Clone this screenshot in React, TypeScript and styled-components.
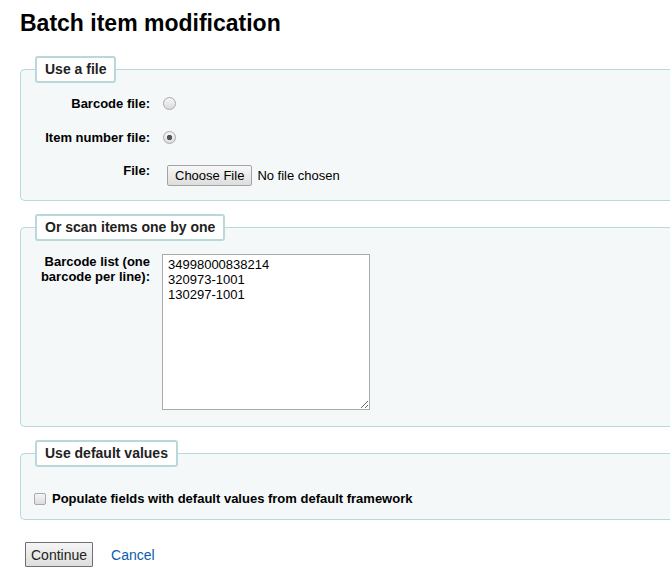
import React from "react";
import styled, { createGlobalStyle } from "styled-components";

const GlobalStyle = createGlobalStyle`
  html, body {
    margin: 0;
    padding: 0;
    background: #fff;
  }
  body {
    font-family: "Liberation Sans", Arial, sans-serif;
    font-size: 13px;
    color: #000;
  }
`;

const Page = styled.main`
  padding: 0 0 0 20px;
`;

const Title = styled.h1`
  margin: 10px 0 20px;
  font-size: 23px;
  line-height: 26px;
  font-weight: bold;
  color: #000;
`;

const Fieldset = styled.fieldset<{ $padBottom?: number }>`
  margin: 0 0 13px;
  padding: 13px 0 ${(p) => p.$padBottom ?? 14}px 10px;
  border: 1px solid #b9d8d9;
  border-right: none;
  border-radius: 5px 0 0 5px;
  background: #f4f8f9;
  min-width: 0;
`;

const Legend = styled.legend`
  margin-left: 4px;
  padding: 0 8px;
  border: 2px solid #b9d8d9;
  border-radius: 3px;
  background: #fff;
  font-size: 14px;
  line-height: 23px;
  font-weight: bold;
  color: #222;
`;

const Row = styled.div<{ $last?: boolean }>`
  display: flex;
  align-items: flex-start;
  margin-bottom: ${(p) => (p.$last ? 0 : 18.5)}px;
`;

const Label = styled.label`
  flex: 0 0 119px;
  margin-right: 12px;
  text-align: right;
  font-weight: bold;
  font-size: 13px;
  line-height: 15px;
`;

const Radio = styled.input.attrs({ type: "radio" })`
  appearance: none;
  box-sizing: border-box;
  width: 13px;
  height: 13px;
  margin: 1px 0 0 1px;
  border: 1px solid #a9a9a9;
  border-radius: 50%;
  background: linear-gradient(#f6f6f6, #dcdcdc);

  &:checked {
    background: radial-gradient(circle, #555 0 2.4px, transparent 3px),
      linear-gradient(#f6f6f6, #dcdcdc);
  }
`;

const FileInput = styled.input.attrs({ type: "file" })`
  margin: 2px 0 0 5px;
  font-family: "Liberation Sans", Arial, sans-serif;
  font-size: 13px;
  color: #000;

  &::file-selector-button {
    box-sizing: border-box;
    height: 21px;
    margin-right: 5px;
    padding: 0 7px;
    border: 1px solid #a3a3a3;
    border-radius: 2px;
    background: linear-gradient(#f8f8f8, #dddddd);
    font-family: "Liberation Sans", Arial, sans-serif;
    font-size: 13px;
    color: #000;
  }
`;

const BarcodeList = styled.textarea`
  box-sizing: border-box;
  display: block;
  width: 208px;
  height: 156px;
  margin: 0 0 2px;
  padding: 2px 5px;
  border: 1px solid #a9a9a9;
  background: #fff;
  font-family: "Liberation Sans", Arial, sans-serif;
  font-size: 13px;
  line-height: 15px;
  color: #000;
`;

const CheckRow = styled.label`
  display: flex;
  align-items: center;
  gap: 6px;
  margin: 11px 0 0 3px;
  font-weight: bold;
  font-size: 13px;
  line-height: 15px;
`;

const Checkbox = styled.input.attrs({ type: "checkbox" })`
  appearance: none;
  box-sizing: border-box;
  width: 12px;
  height: 12px;
  margin: 0;
  border: 1px solid #a9a9a9;
  border-radius: 2px;
  background: linear-gradient(#f6f6f6, #dcdcdc);
`;

const Actions = styled.div`
  display: flex;
  align-items: center;
  gap: 18px;
  padding: 9px 0 0 5px;
`;

const Button = styled.button`
  box-sizing: border-box;
  height: 25px;
  padding: 0 5px;
  border: 1px solid #707070;
  border-radius: 1px;
  background: linear-gradient(#f5f5f5, #dedede);
  font-family: "Liberation Sans", Arial, sans-serif;
  font-size: 14px;
  color: #222;
`;

const CancelLink = styled.a`
  color: #0b5cad;
  font-size: 14px;
  text-decoration: none;
`;

export default function App() {
  return (
    <Page>
      <GlobalStyle />
      <Title>Batch item modification</Title>

      <Fieldset>
        <Legend>Use a file</Legend>
        <Row>
          <Label htmlFor="barcode_file">Barcode file:</Label>
          <Radio id="barcode_file" name="filecontent" value="barcode_file" />
        </Row>
        <Row>
          <Label htmlFor="itemid_file">Item number file:</Label>
          <Radio id="itemid_file" name="filecontent" value="itemid_file" defaultChecked />
        </Row>
        <Row $last>
          <Label htmlFor="uploadfile">File:</Label>
          <FileInput id="uploadfile" name="uploadfile" />
        </Row>
      </Fieldset>

      <Fieldset>
        <Legend>Or scan items one by one</Legend>
        <Row $last>
          <Label htmlFor="barcodelist">Barcode list (one barcode per line):</Label>
          <BarcodeList
            id="barcodelist"
            name="barcodelist"
            defaultValue={"34998000838214\n320973-1001\n130297-1001"}
          />
        </Row>
      </Fieldset>

      <Fieldset $padBottom={13}>
        <Legend>Use default values</Legend>
        <CheckRow>
          <Checkbox name="use_default_values" />
          Populate fields with default values from default framework
        </CheckRow>
      </Fieldset>

      <Actions>
        <Button type="button">Continue</Button>
        <CancelLink href="#">Cancel</CancelLink>
      </Actions>
    </Page>
  );
}
